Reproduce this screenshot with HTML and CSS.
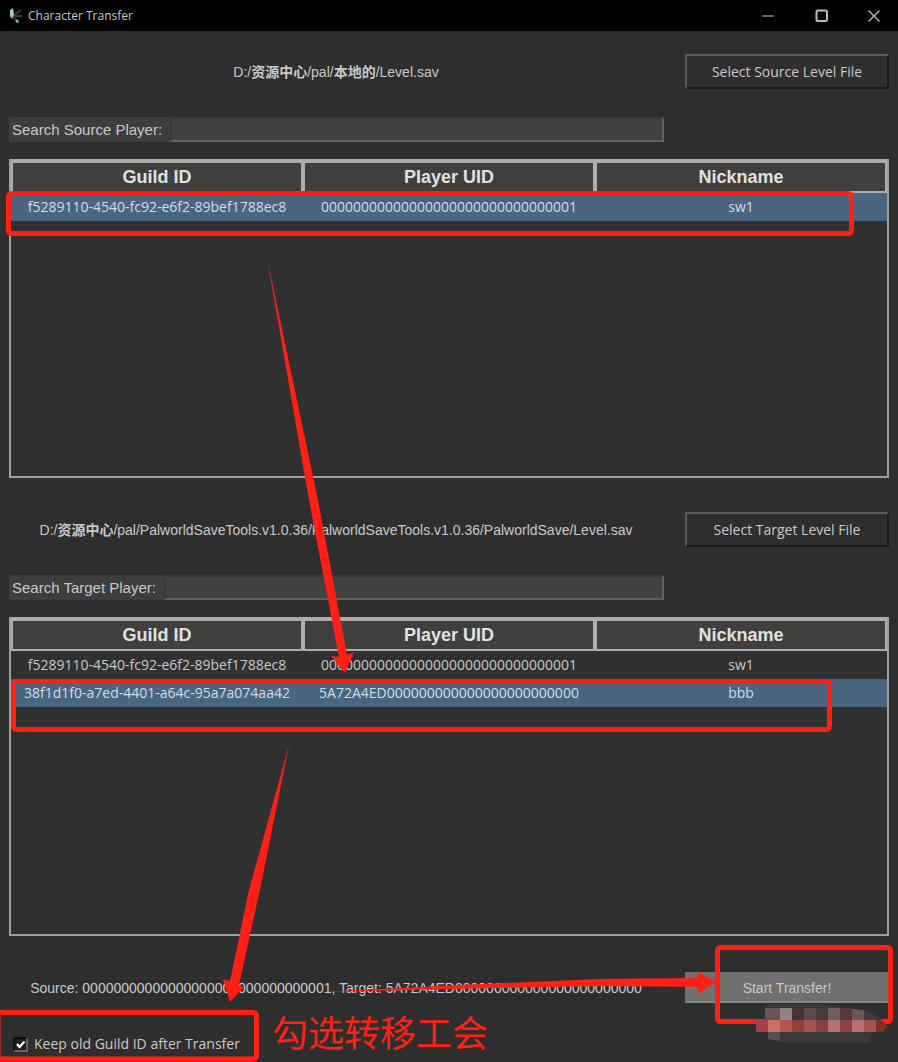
FILE: index.html
```html
<!DOCTYPE html>
<html lang="zh-CN">
<head>
<meta charset="utf-8">
<meta name="viewport" content="width=device-width, initial-scale=1">
<title>Character Transfer</title>
<link rel="stylesheet" href="styles.css">
</head>
<body>
<header class="titlebar">
  <svg class="app-icon" viewBox="0 0 16 20" aria-hidden="true">
    <path d="M2 4 L5 2 L6 9 L4 13 L2 10 Z" fill="#a9c8bf"/>
    <path d="M6 9 L13 4 M6 10 L14 10 M5 11 L11 17" stroke="#2c443e" stroke-width="2" fill="none"/>
    <circle cx="9" cy="15" r="1.5" fill="#8fb5aa"/>
  </svg>
  <h1 class="title">Character Transfer</h1>
  <div class="window-controls">
    <button class="window-button" aria-label="Minimize"><svg viewBox="0 0 14 14"><path d="M1 7H13"/></svg></button>
    <button class="window-button" aria-label="Maximize"><svg viewBox="0 0 14 14"><rect x="1.5" y="1.5" width="10.5" height="10.5" rx="1.5" stroke-width="2"/></svg></button>
    <button class="window-button" aria-label="Close"><svg viewBox="0 0 14 14"><path d="M1.5 1.5L12.5 12.5M12.5 1.5L1.5 12.5" stroke-width="1.4"/></svg></button>
  </div>
</header>

<main class="content">
  <section class="panel">
    <div class="form-row">
      <p class="path">D:/<b>资源中心</b>/pal/<b>本地的</b>/Level.sav</p>
      <button class="button">Select Source Level File</button>
    </div>
    <div class="search">
      <label class="search-label" for="source-search">Search Source Player:</label>
      <input class="search-input" id="source-search" type="text">
    </div>
    <div class="table-frame">
      <table class="players">
        <thead><tr><th>Guild ID</th><th>Player UID</th><th>Nickname</th></tr></thead>
        <tbody>
          <tr class="selected"><td>f5289110-4540-fc92-e6f2-89bef1788ec8</td><td>00000000000000000000000000000001</td><td>sw1</td></tr>
        </tbody>
      </table>
    </div>
  </section>

  <section class="panel">
    <div class="form-row">
      <p class="path">D:/<b>资源中心</b>/pal/PalworldSaveTools.v1.0.36/PalworldSaveTools.v1.0.36/PalworldSave/Level.sav</p>
      <button class="button">Select Target Level File</button>
    </div>
    <div class="search">
      <label class="search-label" for="target-search">Search Target Player:</label>
      <input class="search-input" id="target-search" type="text">
    </div>
    <div class="table-frame">
      <table class="players">
        <thead><tr><th>Guild ID</th><th>Player UID</th><th>Nickname</th></tr></thead>
        <tbody>
          <tr><td>f5289110-4540-fc92-e6f2-89bef1788ec8</td><td>00000000000000000000000000000001</td><td>sw1</td></tr>
          <tr class="selected"><td>38f1d1f0-a7ed-4401-a64c-95a7a074aa42</td><td>5A72A4ED000000000000000000000000</td><td>bbb</td></tr>
        </tbody>
      </table>
    </div>
  </section>

  <div class="form-row">
    <p class="path">Source: 00000000000000000000000000000001, Target: 5A72A4ED000000000000000000000000</p>
    <button class="button button-primary">Start Transfer!</button>
  </div>
  <div class="options">
    <label class="keep"><input class="check" type="checkbox" checked>Keep old Guild ID after Transfer</label>
  </div>
</main>

<svg class="annotations" width="898" height="1062" viewBox="0 0 898 1062" aria-hidden="true">
  <g fill="none" stroke="#ff2015" stroke-width="5">
    <rect x="8.500" y="193.500" width="843" height="40" rx="3"/>
    <rect x="13.500" y="681.500" width="816" height="48" rx="3"/>
    <rect x="-2" y="1012.500" width="258.500" height="46.500" rx="3"/>
    <rect x="717.500" y="947.500" width="173" height="74" rx="3"/>
  </g>
  <g fill="#ff2015">
    <path d="M267 258 L318 500 L347 655 L354 652 L345 673 L331 656 L339 657 L309 500 Z"/>
    <path d="M289 745 L262 880 L239 985 L244 987 L230 1002 L223 979 L230 981 L249 890 Z"/>
    <path d="M320 992 L460 985 L600 979 L698 978 L697 971 L716 982 L698 994 L698 987 L600 986 L450 989 Z"/>
  </g>
  <g shape-rendering="crispEdges">
    <path d="M765 1008 L768 1004 L825 1004 L835 1007 L865 1010 L877 1016 L888 1027 L882 1032 L872 1032 L869 1043 L785 1043 L768 1039 L768 1032 L756 1032 L756 1020 L765 1020 Z" fill="#3b3838"/>
    <path d="M765 1008H780V1020H765Z" fill="#665657"/>
    <path d="M780 1008H792V1020H780Z" fill="#928384"/>
    <path d="M792 1008H804V1020H792Z" fill="#4b3031"/>
    <path d="M804 1008H816V1020H804Z" fill="#5c4b4b"/>
    <path d="M816 1008H828V1020H816Z" fill="#4b3a3a"/>
    <path d="M828 1008H840V1020H828Z" fill="#705d5e"/>
    <path d="M840 1008H852V1020H840Z" fill="#5a3838"/>
    <path d="M852 1009L864 1010V1020H852Z" fill="#675758"/>
    <path d="M864 1010L880 1020H864Z" fill="#4a3939"/>
    <path d="M756 1020H768V1032H756Z" fill="#a24443"/>
    <path d="M768 1020H780V1032H768Z" fill="#c8716b"/>
    <path d="M780 1020H792V1032H780Z" fill="#b65550"/>
    <path d="M792 1020H804V1032H792Z" fill="#8e403f"/>
    <path d="M804 1020H816V1032H804Z" fill="#a15452"/>
    <path d="M816 1020H828V1032H816Z" fill="#893f40"/>
    <path d="M828 1020H840V1032H828Z" fill="#b17573"/>
    <path d="M840 1020H852V1032H840Z" fill="#8e4142"/>
    <path d="M852 1020H864V1032H852Z" fill="#b67371"/>
    <path d="M864 1020H876V1032H864Z" fill="#a25251"/>
    <path d="M876 1020H882L888 1027L882 1032H876Z" fill="#822b29"/>
    <path d="M768 1032H780V1041L768 1039Z" fill="#555151"/>
  </g>
</svg>
<p class="note">勾选转移工会</p>
</body>
</html>
```
FILE: styles.css
```css
* {
  box-sizing: border-box;
}

body {
  position: relative;
  margin: 0;
  min-height: 100vh;
  overflow-x: hidden;
  background: #2e2e2e;
  color: #c9c9c9;
  font: 14px/20px "Open Sans", "Noto Sans CJK SC", sans-serif;
}

.titlebar {
  display: flex;
  align-items: center;
  height: 31px;
  padding-left: 8px;
  background: #000;
}

.app-icon {
  width: 16px;
  height: 20px;
}

.title {
  flex: 1;
  margin: 0 0 0 4px;
  font-size: 12px;
  font-weight: 400;
}

.window-controls {
  display: flex;
  gap: 2px;
}

.window-button {
  width: 52px;
  height: 31px;
  padding: 0;
  border: 0;
  background: none;
}

.window-button:last-child {
  width: 48px;
}

.window-button svg {
  display: block;
  width: 14px;
  height: 14px;
  margin: auto;
  fill: none;
  stroke: #bdbdbd;
}

.content {
  padding: 23px 9px 0;
}

.panel {
  margin-bottom: 34px;
}

.panel:last-of-type {
  margin-bottom: 36px;
}

.form-row {
  display: grid;
  grid-template-columns: 1fr 204px;
  column-gap: 22px;
  align-items: center;
}

.path {
  margin: 0;
  text-align: center;
  white-space: nowrap;
  font-family: "Liberation Sans", "Noto Sans CJK SC", sans-serif;
}

.button {
  height: 35px;
  padding: 0;
  border: 2px solid;
  border-color: #5c5c5c #191919 #191919 #5c5c5c;
  background: #2e2e2e;
  color: #c9c9c9;
  font: 14px/20px "Open Sans", sans-serif;
}

.button-primary {
  height: 31px;
  border-color: #707070 #707070 #858585;
  background: #707070;
  font-family: "Liberation Sans", sans-serif;
}

.search {
  display: flex;
  height: 25px;
  margin: 28px 225px 17px 0;
}

.search-label {
  padding: 0 8px 0 3px;
  background: #3d3d3d;
  font: 15px/25px "Liberation Sans", sans-serif;
}

.search-input {
  flex: 1;
  min-width: 0;
  border: 2px solid;
  border-color: #393939 #606060 #606060 #393939;
  background: #414141;
  color: #c9c9c9;
}

.table-frame {
  height: 319px;
  border: 2px solid #a0a0a0;
  border-top: 0;
  background: #303030;
}

.players {
  width: 100%;
  table-layout: fixed;
  border-collapse: separate;
  border-spacing: 0;
  text-align: center;
}

.players th {
  height: 34px;
  padding: 0;
  border: 3px solid #adadab;
  border-width: 4px 2px 2px;
  background: #3f3f3e;
  color: #e2e2e2;
  font: bold 18px/28px "Liberation Sans", sans-serif;
}

.players td {
  height: 28px;
  padding: 0;
}

.selected td {
  background: #49657f;
  color: #d3dfe8;
}

.options {
  padding: 31px 4px 0;
}

.keep {
  display: inline-flex;
  align-items: center;
  gap: 6px;
}

.check {
  appearance: none;
  width: 15px;
  height: 15px;
  margin: 0;
  border: 2px solid;
  border-color: #111 #666 #666 #111;
  background: #1c1c1c;
}

.check:checked {
  background: #1c1c1c url("data:image/svg+xml,%3Csvg xmlns='http://www.w3.org/2000/svg' viewBox='0 0 11 11'%3E%3Cpath d='M2 5L4.5 8L9.500 2.500' fill='none' stroke='%23fff' stroke-width='2.200'/%3E%3C/svg%3E") center / 11px 11px no-repeat;
}

.annotations {
  position: absolute;
  top: 0;
  left: 0;
  pointer-events: none;
}

.note {
  position: absolute;
  top: 1007px;
  left: 272px;
  margin: 0;
  color: #ff2015;
  font: 36px/48px "Noto Sans CJK SC", sans-serif;
}
```
